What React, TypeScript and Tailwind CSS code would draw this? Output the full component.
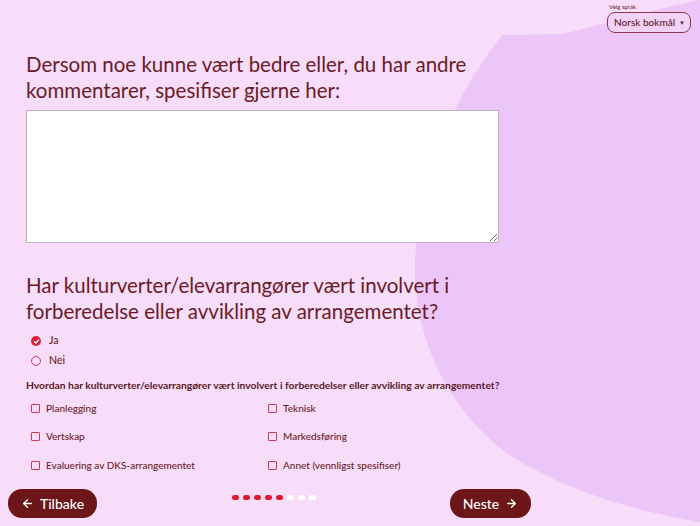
import React, { useState } from "react";

const options = [
  "Planlegging",
  "Teknisk",
  "Vertskap",
  "Markedsføring",
  "Evaluering av DKS-arrangementet",
  "Annet (vennligst spesifiser)",
];

const ArrowLeft = () => (
  <svg width="13" height="13" viewBox="0 0 24 24" fill="none" stroke="currentColor" strokeWidth="2.4" strokeLinecap="round" strokeLinejoin="round">
    <path d="M19 12H5" />
    <path d="M12 19l-7-7 7-7" />
  </svg>
);

const ArrowRight = () => (
  <svg width="13" height="13" viewBox="0 0 24 24" fill="none" stroke="currentColor" strokeWidth="2.4" strokeLinecap="round" strokeLinejoin="round">
    <path d="M5 12h14" />
    <path d="M12 5l7 7-7 7" />
  </svg>
);

const Radio = ({ checked, label }: { checked: boolean; label: string }) => (
  <label className="flex h-[20px] items-center gap-[8px] pl-[5px] text-[10.5px] font-medium text-[#6b1b24]">
    {checked ? (
      <span className="flex h-[10px] w-[10px] items-center justify-center rounded-full bg-[#d8213a]">
        <svg width="7" height="7" viewBox="0 0 10 10" fill="none" stroke="white" strokeWidth="1.8" strokeLinecap="round" strokeLinejoin="round">
          <path d="M2 5.2l2 2 4-4.4" />
        </svg>
      </span>
    ) : (
      <span className="h-[10px] w-[10px] rounded-full border-[1.3px] border-[#d03a52]" />
    )}
    {label}
  </label>
);

export default function App() {
  const [comment, setComment] = useState("");

  return (
    <div className="relative h-[526px] w-full overflow-hidden bg-[#f7ddfa] font-['Lato',sans-serif] text-[#6b1b24]">
      {/* background blob */}
      <svg className="pointer-events-none absolute inset-0 h-full w-full" viewBox="0 0 700 526" preserveAspectRatio="none" aria-hidden="true">
        <path
          d="M502 35 L563 34 C610 22 660 8 700 0 L700 522 C640 512 565 492 505 452 C445 405 413 335 415 262 C418 175 455 95 502 35 Z"
          fill="#ecc6f8"
        />
      </svg>

      <div className="relative flex flex-col">
        {/* language picker */}
        <div className="flex flex-col items-start self-end pr-[9px] pt-[2px]">
          <span className="pl-[2px] text-[6px] leading-[9px] text-[#6b1b24]">Velg språk</span>
          <button className="mt-[1px] flex h-[21px] items-center gap-[4px] rounded-[8px] border border-[#8d3a4e] bg-[#f2d2f6] pl-[6px] pr-[5px] text-[10px] font-medium text-[#5c1a25]">
            Norsk bokmål
            <span className="text-[6px]">▼</span>
          </button>
        </div>

        <div className="flex w-[520px] flex-col pl-[26px]">
          <h2 className="mt-[18px] w-[480px] text-[20.5px] leading-[26px]">
            Dersom noe kunne vært bedre eller, du har andre kommentarer, spesifiser gjerne her:
          </h2>
          <textarea
            value={comment}
            onChange={(e) => setComment(e.target.value)}
            className="mt-[7px] h-[133px] w-[473px] border border-[#b9b3bb] bg-white"
          />

          <h2 className="mt-[29px] w-[480px] text-[20.5px] leading-[26px]">
            Har kulturverter/elevarrangører vært involvert i forberedelse eller avvikling av arrangementet?
          </h2>

          <div className="mt-[7px] flex flex-col">
            <Radio checked label="Ja" />
            <Radio checked={false} label="Nei" />
          </div>

          <p className="mt-[6px] whitespace-nowrap text-[10.3px] font-bold leading-[16px] text-[#5a1825]">
            Hvordan har kulturverter/elevarrangører vært involvert i forberedelser eller avvikling av arrangementet?
          </p>

          <div className="mt-[1px] grid w-[474px] grid-cols-2">
            {options.map((o) => (
              <label key={o} className="flex h-[28.5px] items-center gap-[6px] pl-[5px] text-[10px] font-medium text-[#6b1b24]">
                <span className="h-[9px] w-[9px] rounded-[1px] border-[1.4px] border-[#cc3a52]" />
                {o}
              </label>
            ))}
          </div>
        </div>

        {/* navigation */}
        <div className="mt-[9px] flex w-[531px] items-start justify-between pl-[8px]">
          <button className="flex h-[29px] w-[89px] items-center justify-center gap-[6px] rounded-[14px] bg-[#6c1619] text-[14px] font-medium text-white">
            <ArrowLeft />
            Tilbake
          </button>
          <div className="mt-[6px] flex gap-[4px]">
            {[0, 1, 2, 3, 4, 5, 6, 7].map((i) => (
              <span key={i} className={i < 5 ? "h-[5px] w-[7px] rounded-full bg-[#e0182d]" : "h-[5px] w-[7px] rounded-full bg-white"} />
            ))}
          </div>
          <button className="flex h-[29px] w-[81px] items-center justify-center gap-[6px] rounded-[14px] bg-[#6c1619] text-[14px] font-medium text-white">
            Neste
            <ArrowRight />
          </button>
        </div>
      </div>
    </div>
  );
}
